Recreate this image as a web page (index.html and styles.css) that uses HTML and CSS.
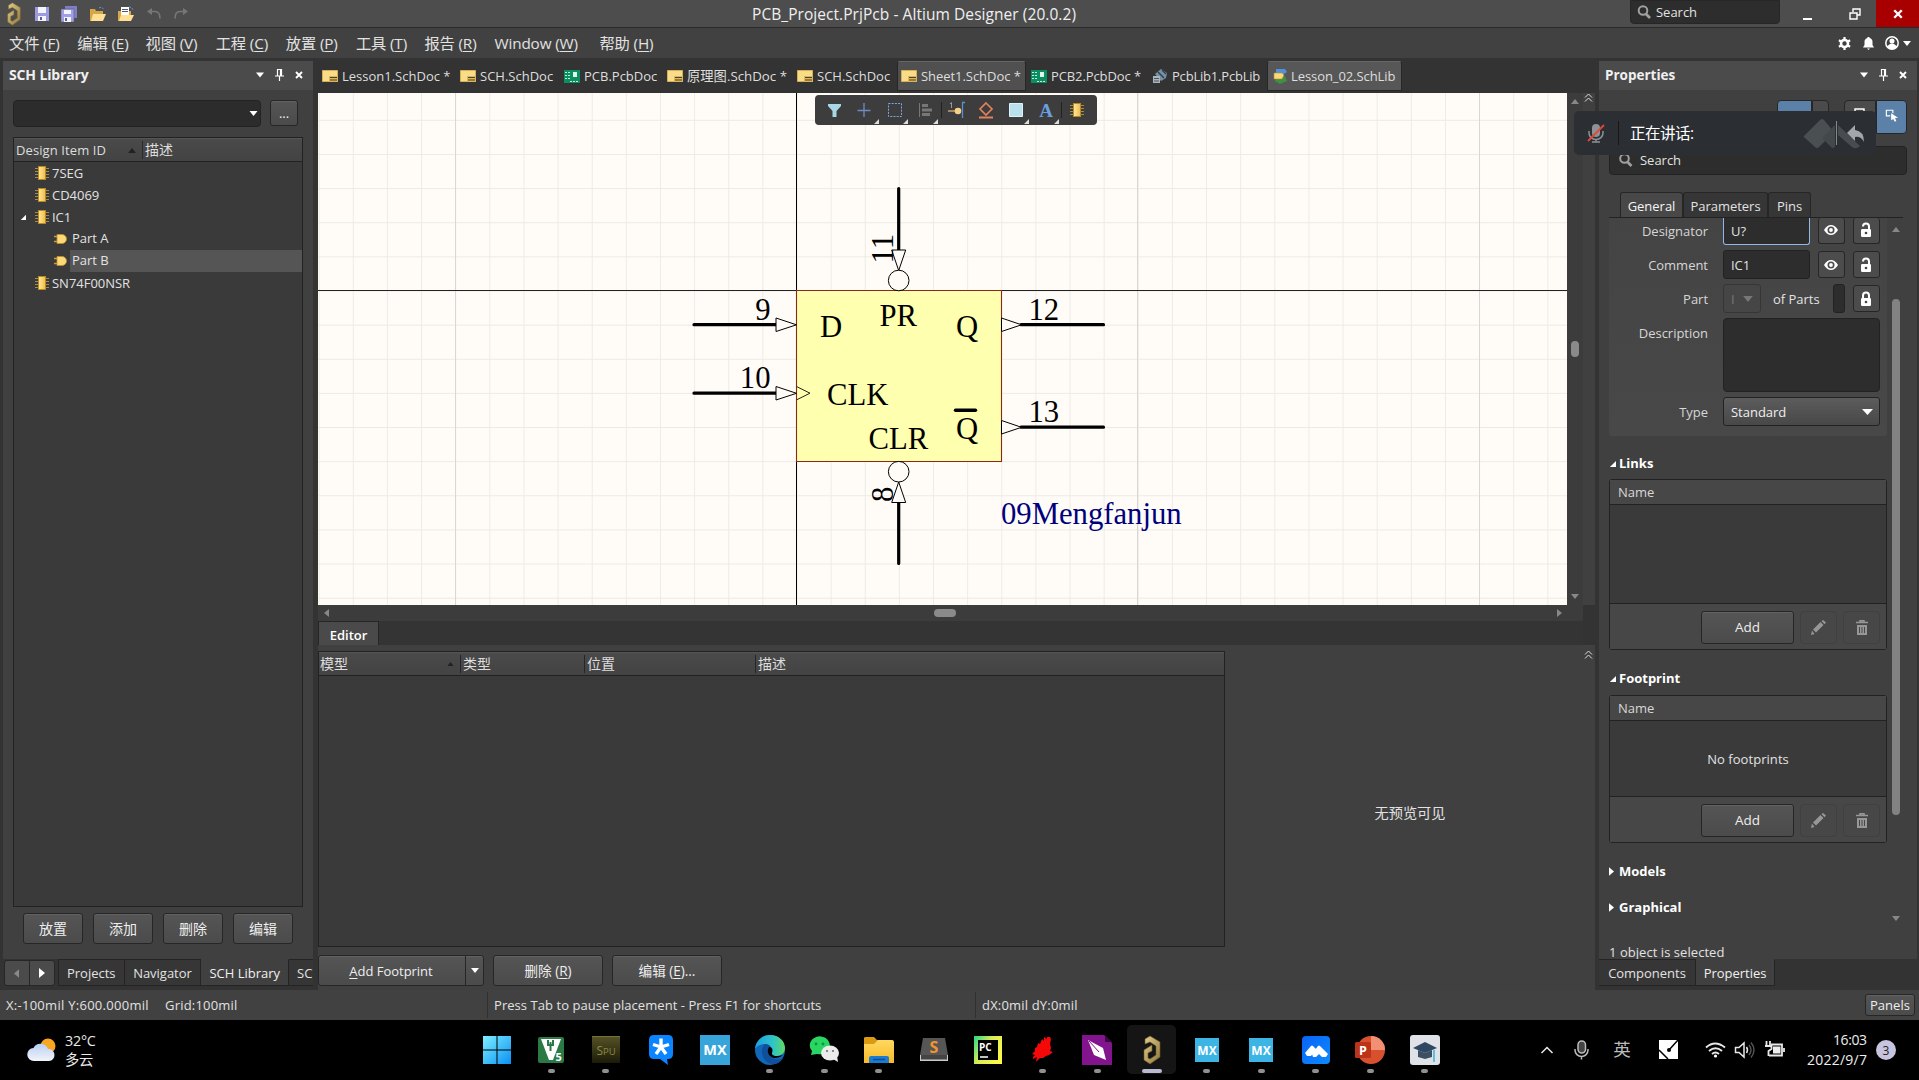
FILE: index.html
```html
<!DOCTYPE html>
<html lang="zh-CN">
<head>
<meta charset="utf-8">
<title>PCB_Project.PrjPcb - Altium Designer (20.0.2)</title>
<link rel="stylesheet" href="styles.css">
</head>
<body>
<svg class="defs" width="0" height="0">
  <defs>
    <linearGradient id="gold" x1="0" y1="0" x2="1" y2="0"><stop offset="0" stop-color="#ffe9a0"/><stop offset="1" stop-color="#f0bc4a"/></linearGradient>
    <linearGradient id="altiumGold" x1="0" y1="0" x2="1" y2="1"><stop offset="0" stop-color="#e3cf90"/><stop offset="1" stop-color="#8f7638"/></linearGradient>
    <linearGradient id="win" x1="0" y1="0" x2="1" y2="1"><stop offset="0" stop-color="#7df0ff"/><stop offset="1" stop-color="#0a90f4"/></linearGradient>
    <linearGradient id="edgeA" x1="0" y1="0" x2="1" y2="0"><stop offset="0" stop-color="#1d9fe0"/><stop offset=".6" stop-color="#2fc4c9"/><stop offset="1" stop-color="#63d860"/></linearGradient>
    <linearGradient id="meet" x1="0" y1="0" x2="1" y2="1"><stop offset="0" stop-color="#0b62f5"/><stop offset="1" stop-color="#0c8bff"/></linearGradient>
    <linearGradient id="pc" x1="0" y1="0" x2="1" y2=".6"><stop offset="0" stop-color="#21d789"/><stop offset=".5" stop-color="#d9ec55"/><stop offset="1" stop-color="#fcf84a"/></linearGradient>
    <linearGradient id="cloud" x1="0" y1="0" x2="0" y2="1"><stop offset="0" stop-color="#b9cff5"/><stop offset="1" stop-color="#f2f4f8"/></linearGradient>
    <linearGradient id="spu" x1="0" y1="0" x2="0" y2="1"><stop offset="0" stop-color="#575426"/><stop offset="1" stop-color="#1b1a08"/></linearGradient>
    <linearGradient id="folder" x1="0" y1="0" x2="0" y2="1"><stop offset="0" stop-color="#ffd95e"/><stop offset="1" stop-color="#f7b92a"/></linearGradient>
  </defs>
  <symbol id="chip" viewBox="0 0 14 14"><path d="M0 2.500h14M0 5.500h14M0 8.500h14M0 11.500h14" stroke="#a8893f"/><rect x="3.500" y=".500" width="7" height="13" fill="url(#gold)" stroke="#b98a22"/></symbol>
  <symbol id="gate" viewBox="0 0 13 10"><path d="M0 2.500h4M0 7.500h4" stroke="#c99c3a" stroke-width="1.400"/><path d="M3 .500h5a4.500 4.500 0 0 1 0 9H3z" fill="#fbd878" stroke="#c38f2c" stroke-width=".800"/></symbol>
  <symbol id="sch" viewBox="0 0 16 12"><path d="M.500.500h15v11H.500z" fill="#f8dc87" stroke="#d6b057"/><path d="M7 6h9v6H7z" fill="#dcb65c"/><path d="M8 7.500h7M8 10h7" stroke="#4d4226"/></symbol>
  <symbol id="pcb" viewBox="0 0 16 13"><path d="M0 0h16v13H0z" fill="#0c8f60"/><path d="M1 2.500h2M1 5.500h2M1 8.500h2M4 2.500h3M4 5.500h3M4 8.500h3M6 11.500h9" stroke="#bff0dc" stroke-dasharray="2 1"/><path d="M9 2h4v5H9z" fill="#e2f5ee"/></symbol>
  <symbol id="pcblib" viewBox="0 0 16 14"><path d="m3 5 6-5 6 4-1 5-5 3z" fill="#7890a5"/><path d="m6 3 6 6M10 1l4 4" stroke="#33414d" stroke-width="1.500"/><path d="M1 7h7v7H1z" fill="#aab5bd"/><path d="M2 9.500h5M2 12h5" stroke="#4a555d"/></symbol>
  <symbol id="schlib" viewBox="0 0 15 15"><path d="M3 0h9l2 3-3 2H3z" fill="#4f91dd"/><path d="m3 9 9-2 2 5-7 3-5-3z" fill="#3f9142"/><path d="M1 4h8l2 2-2 4H1z" fill="#fbd978" stroke="#b58b2c" stroke-width=".600"/></symbol>
  <symbol id="pin" viewBox="0 0 9 12"><path d="M2 .500h5M2.500 0v6.500M5.500 0v6.500M6.500 0v6.500M0 7h9M4.500 7v5" stroke="#fff" stroke-width="1.200" fill="none"/></symbol>
  <symbol id="x" viewBox="0 0 8 8"><path d="m1 1 6 6M7 1 1 7" stroke="#fff" stroke-width="1.900"/></symbol>
  <symbol id="down" viewBox="0 0 8 5"><path d="M0 0h8L4 5z" fill="currentColor"/></symbol>
  <symbol id="up" viewBox="0 0 8 5"><path d="M0 5h8L4 0z" fill="currentColor"/></symbol>
  <symbol id="mag" viewBox="0 0 14 14"><circle cx="6" cy="5.500" r="4.300" fill="none" stroke="#a0a0a0" stroke-width="2"/><path d="m9 9 4 4" stroke="#a0a0a0" stroke-width="2.600"/></symbol>
  <symbol id="open" viewBox="0 0 8 8"><path d="M8 1v7H1z" fill="#fff"/></symbol>
  <symbol id="closed" viewBox="0 0 6 10"><path d="m0 0 6 5-6 5z" fill="#fff"/></symbol>
  <symbol id="chev" viewBox="0 0 9 9"><path d="m1 4.500 3.500-3.500L8 4.500M1 8.500 4.500 5 8 8.500" fill="none" stroke="#ddd"/></symbol>
  <symbol id="eye" viewBox="0 0 14 12"><path d="M0 6q3-5 7-5t7 5q-3 5-7 5T0 6z" fill="#fff"/><circle cx="7" cy="6" r="3.500" fill="#4b4b4b"/><circle cx="7" cy="6" r="1.900" fill="#fff"/></symbol>
  <symbol id="unlock" viewBox="0 0 12 16"><rect x="1" y="7" width="10" height="8" rx="1.200" fill="#fff"/><path d="M3 4.500a3 3 0 0 1 6 0V8" fill="none" stroke="#fff" stroke-width="2"/><circle cx="6" cy="11" r="1.300" fill="#444"/></symbol>
  <symbol id="lock" viewBox="0 0 12 16"><rect x="1" y="7" width="10" height="8" rx="1.200" fill="#fff"/><path d="M3 8V4.500a3 3 0 0 1 6 0V8" fill="none" stroke="#fff" stroke-width="2"/><circle cx="6" cy="11" r="1.300" fill="#444"/></symbol>
  <symbol id="pencil" viewBox="0 0 15 15"><path d="m0 15 1-4.500L3.500 14zM2 9.500l7.500-7.500 3 3L5 12.500zM10.500 1 12 0l3 2.500-1.500 1.700z" fill="#979797"/></symbol>
  <symbol id="trash" viewBox="0 0 12 15"><path d="M0 2.500h12M4 2V.700h4V2" stroke="#979797" stroke-width="1.500" fill="none"/><path d="M1 5h10v10H1z" fill="#979797"/><path d="M3.500 7v6M6 7v6M8.500 7v6" stroke="#484848"/></symbol>
  <symbol id="altium" viewBox="0 0 20 30"><path d="M3 9V4L8 1l10 6v15L8 29l-6-4V15l8-5v6l-4 2v5l2 1 6-4v-9L8 7z" fill="url(#altiumGold)" stroke="#6f5c2b" stroke-width=".600"/></symbol>
</svg>

<header class="titlebar">
  <div class="quick">
    <svg class="q-logo" width="16" height="24"><use href="#altium"/></svg>
    <svg width="14" height="14" viewBox="0 0 14 14"><path d="M0 0h14v14H0z" fill="#9c9be0"/><path d="M3 0h8v6H3zM3 9h8v5H3z" fill="#f4f4ff"/><path d="M5 10h2v3H5z" fill="#5a59a8"/></svg>
    <svg width="16" height="16" viewBox="0 0 16 16"><path d="M4 0h12v12H4z" fill="#7f7ec6"/><path d="M0 3h13v13H0z" fill="#a09fe6" stroke="#555" stroke-width=".500"/><path d="M3 4h7v4H3zM3 11h7v5H3z" fill="#f4f4ff"/><path d="M4 12h2v3H4z" fill="#5a59a8"/></svg>
    <svg width="16" height="16" viewBox="0 0 16 16"><path d="M0 3h5l1 2h7v10H0z" fill="#d6a748"/><path d="M3 8h13l-3 7H1z" fill="#ffdf94"/><path d="M9 2q3-2 5 2" fill="none" stroke="#5b9bd6" stroke-dasharray="2 1"/></svg>
    <svg width="16" height="16" viewBox="0 0 16 16"><path d="M0 5h13v10H0z" fill="#d6a748"/><path d="M3 1h8v9H3z" fill="#fff"/><path d="M4 3.500h6M4 5.500h6" stroke="#557"/><path d="M3 9h13l-3 6H1z" fill="#ffdf94"/><path d="M11 1q3 0 4 3" fill="none" stroke="#5b9bd6" stroke-dasharray="2 1"/></svg>
    <svg width="14" height="11" viewBox="0 0 14 11"><path d="M5 0v7L0 3.500z" fill="#777"/><path d="M4 3.500h4q5 0 5 7" stroke="#777" stroke-width="1.600" fill="none"/></svg>
    <svg width="14" height="11" viewBox="0 0 14 11"><path d="M9 0v7l5-3.500z" fill="#777"/><path d="M10 3.500H6q-5 0-5 7" stroke="#777" stroke-width="1.600" fill="none"/></svg>
  </div>
  <div class="title">PCB_Project.PrjPcb - Altium Designer (20.0.2)</div>
  <div class="winctl">
    <div class="tsearch"><svg width="14" height="14"><use href="#mag"/></svg><span>Search</span></div>
    <div class="wbtn min"><i></i></div>
    <div class="wbtn"><svg width="12" height="12" viewBox="0 0 12 12"><path d="M4 4V1h7v6H8M1 5h7v6H1z" fill="none" stroke="#fff" stroke-width="1.400"/></svg></div>
    <div class="wbtn close"><svg width="10" height="10"><use href="#x" width="10" height="10"/></svg></div>
  </div>
</header>

<nav class="menubar">
  <span class="m1">文件 (<u>F</u>)</span><span class="m1">编辑 (<u>E</u>)</span><span class="m2">视图 (<u>V</u>)</span><span class="m2">工程 (<u>C</u>)</span><span class="m2">放置 (<u>P</u>)</span><span class="m4">工具 (<u>T</u>)</span><span class="m2">报告 (<u>R</u>)</span><span class="m3">Window (<u>W</u>)</span><span class="m1">帮助 (<u>H</u>)</span>
  <div class="menu-icons">
    <svg width="13" height="13" viewBox="0 0 13 13"><circle cx="6.500" cy="6.500" r="3.500" fill="none" stroke="#fff" stroke-width="2.600"/><path d="M6.500 0v3M6.500 10v3M.900 3.200l2.600 1.500M9.500 8.300l2.600 1.500M.900 9.800l2.600-1.500M9.500 4.700l2.600-1.500" stroke="#fff" stroke-width="2.200"/></svg>
    <svg width="11" height="13" viewBox="0 0 11 13"><path d="M0 10.500 1.500 8V5a4 4 0 0 1 3-4V0h2v1a4 4 0 0 1 3 4v3l1.500 2.500zM4 11.500h3L5.500 13z" fill="#fff"/></svg>
    <svg width="14" height="14" viewBox="0 0 14 14"><circle cx="7" cy="7" r="6.200" fill="none" stroke="#fff" stroke-width="1.500"/><circle cx="7" cy="5" r="2.500" fill="#fff"/><path d="M2 11q2-3.500 5-3.500t5 3.500l-2.500 2h-5z" fill="#fff"/></svg>
    <svg width="8" height="5"><use href="#down"/></svg>
  </div>
</nav>

<main class="workspace">
  <section class="left">
    <div class="panel">
      <div class="phead"><b>SCH Library</b><svg width="8" height="6"><use href="#down"/></svg><svg width="9" height="12"><use href="#pin"/></svg><svg width="8" height="8"><use href="#x"/></svg></div>
      <div class="lib-top"><div class="combo"><svg width="9" height="5"><use href="#down"/></svg></div><div class="btn dots">...</div></div>
      <div class="lib-table">
        <div class="thead"><span class="c1">Design Item ID<svg width="8" height="5"><use href="#up"/></svg></span><span class="c2">描述</span></div>
        <div class="row"><svg class="chip" width="14" height="14"><use href="#chip"/></svg>7SEG</div>
        <div class="row"><svg class="chip" width="14" height="14"><use href="#chip"/></svg>CD4069</div>
        <div class="row open"><svg class="tri" width="6" height="6"><use href="#open"/></svg><svg class="chip" width="14" height="14"><use href="#chip"/></svg>IC1</div>
        <div class="row sub"><svg width="13" height="10"><use href="#gate"/></svg><span>Part A</span></div>
        <div class="row sub sel"><svg width="13" height="10"><use href="#gate"/></svg><span>Part B</span></div>
        <div class="row"><svg class="chip" width="14" height="14"><use href="#chip"/></svg>SN74F00NSR</div>
      </div>
      <div class="lib-btns"><div class="btn">放置</div><div class="btn">添加</div><div class="btn">删除</div><div class="btn">编辑</div></div>
    </div>
    <div class="ptabs">
      <div class="arrows"><span><svg width="5" height="9" viewBox="0 0 6 10"><path d="M6 0 0 5l6 5z" fill="#8a8a8a"/></svg></span><span><svg width="6" height="10"><use href="#closed"/></svg></span></div>
      <div class="pt t1">Projects</div><div class="pt t2">Navigator</div><div class="pt t3 on">SCH Library</div><div class="pt t4">SC</div>
    </div>
  </section>

  <section class="center">
    <div class="doctabs">
      <div class="dt d1"><svg width="16" height="12"><use href="#sch"/></svg>Lesson1.SchDoc *</div>
      <div class="dt d2"><svg width="16" height="12"><use href="#sch"/></svg>SCH.SchDoc</div>
      <div class="dt d3"><svg width="16" height="13"><use href="#pcb"/></svg>PCB.PcbDoc</div>
      <div class="dt d4"><svg width="16" height="12"><use href="#sch"/></svg>原理图.SchDoc *</div>
      <div class="dt d2"><svg width="16" height="12"><use href="#sch"/></svg>SCH.SchDoc</div>
      <div class="dt d5 on"><svg width="16" height="12"><use href="#sch"/></svg>Sheet1.SchDoc *</div>
      <div class="dt d6"><svg width="16" height="13"><use href="#pcb"/></svg>PCB2.PcbDoc *</div>
      <div class="dt d7"><svg width="16" height="14"><use href="#pcblib"/></svg>PcbLib1.PcbLib</div>
      <div class="dt d8 on"><svg width="15" height="15"><use href="#schlib"/></svg>Lesson_02.SchLib</div>
    </div>
    <div class="canvas-row">
      <div class="canvas">
        <svg class="sheet" width="1249" height="512" viewBox="318 93 1249 512">
          <defs>
            <pattern id="minor" x="796.500" y="290.500" width="34.130" height="34.130" patternUnits="userSpaceOnUse"><path d="M0 0H34.130M0 0V34.130" stroke="#edeae6" stroke-width="1.800" fill="none"/></pattern>
          </defs>
          <path d="M318 93h1249v512H318z" fill="#fffcf7"/>
          <path d="M318 93h1249v512H318z" fill="url(#minor)"/>
          <path d="M455.500 93v512M1137.500 93v512M1479.500 93v512" stroke="#d9d7d4"/>
          <path d="M796.500 93v512" stroke="#000"/><path d="M318 290.500h1249" stroke="#222"/>
          <path d="M796.500 290.500h205v171h-205z" fill="#ffffb0" stroke="#8a2a14" stroke-width="1.100"/>
          <g stroke="#000" stroke-width="3.200" stroke-linecap="round"><path d="M694 324.700h82M694 393.200h82M1021 324.700h82.500M1021 427.200h82.500M898.700 188.500V250M898.700 503v60.500"/></g>
          <g fill="#fffcf7" stroke="#000" stroke-width="1">
            <path d="M776 318v13.500l20.500-6.700zM776 386.500V400l20.500-6.700zM1001.500 318v13.500l20-6.700zM1001.500 420.500V434l20-6.700zM891.700 250h14l-7 20.500zM891.700 502.500h14l-7-20.500z"/>
            <circle cx="898.700" cy="280.500" r="10.300"/><circle cx="898.700" cy="471.700" r="10.300"/>
          </g>
          <path d="m796.500 386.500 13.500 6.700-13.500 6.700" fill="none" stroke="#222"/>
          <path d="M955.500 410.300h20" stroke="#000" stroke-width="3.400" stroke-linecap="round"/>
          <g class="stext">
            <text x="770.500" y="320" text-anchor="end">9</text><text x="770.500" y="388" text-anchor="end">10</text>
            <text x="1028.500" y="320">12</text><text x="1028.500" y="422.300">13</text>
            <text x="0" y="0" transform="translate(893 263.500) rotate(-90)">11</text><text x="0" y="0" transform="translate(893 502) rotate(-90)">8</text>
            <text x="820" y="337">D</text><text x="827" y="405">CLK</text><text x="879.500" y="325.800">PR</text><text x="868.500" y="449">CLR</text>
            <text x="956" y="337">Q</text><text x="956" y="439">Q</text>
            <text class="owner" x="1001" y="524">09Mengfanjun</text>
          </g>
        </svg>
        <div class="floatbar">
          <svg width="282" height="30" viewBox="0 0 282 30">
            <path d="M13 9h13v2l-4.500 5v6h-4v-6L13 11z" fill="#a8d8e6"/>
            <path d="M49 8v14M42.500 15.500h13" stroke="#6d8cc4" stroke-width="1.300"/>
            <path d="M73.500 8.500h13v13h-13z" fill="none" stroke="#7fa3e8" stroke-dasharray="2 1.200"/>
            <path d="M104.500 8v14" stroke="#777"/><path d="M107 9h6v3h-6zM107 13.500h10v3h-10zM107 18h8v3h-8z" fill="#777"/>
            <path d="M126.500 7v16M246.500 7v16" stroke="#222"/>
            <path d="M133 16h8" stroke="#c9a566" stroke-width="1.500"/><circle cx="143" cy="16" r="3.300" fill="#f5d28a"/><path d="M150 7.500H147.500V23" fill="none" stroke="#5b8fd0" stroke-width="1.300"/><path d="m135 9 1.500-1.500V13" fill="none" stroke="#999"/>
            <path d="m171 8 6 6-6 6-6-6z" fill="none" stroke="#e0825c" stroke-width="1.700"/><path d="M164 22.500h14" stroke="#e0825c" stroke-width="2"/>
            <path d="M194.500 8.500h13v13h-13z" fill="#b9e0ec" stroke="#dbf2f8"/>
            <text class="glyphA" x="231" y="22" text-anchor="middle">A</text>
            <path d="M64 24v5h-5zM93 24v5h-5zM123 24v5h-5zM214 24v5h-5zM244 24v5h-5z" fill="#ddd"/>
            <use href="#chip" x="255" y="8" width="14" height="14"/>
          </svg>
        </div>
      </div>
      <div class="vsb"><svg width="8" height="5"><use href="#up"/></svg><i></i><svg width="8" height="5"><use href="#down"/></svg></div>
      <div class="gutter"><svg width="9" height="9"><use href="#chev"/></svg></div>
    </div>
    <div class="hsb"><svg width="5" height="8" viewBox="0 0 5 8"><path d="M5 0 0 4l5 4z" fill="#888"/></svg><i></i><svg width="5" height="8" viewBox="0 0 5 8"><path d="m0 0 5 4-5 4z" fill="#888"/></svg></div>
    <div class="edtabs"><div>Editor</div></div>
    <div class="editor">
      <div class="ed-left">
        <div class="ed-table">
          <div class="thead"><span class="e1">模型<svg width="7" height="4" viewBox="0 0 8 5"><use href="#up"/></svg></span><span class="e2">类型</span><span class="e3">位置</span><span class="e4">描述</span></div>
        </div>
        <div class="ed-btns"><div class="btn split"><span><u>A</u>dd Footprint</span><em><svg width="8" height="5"><use href="#down"/></svg></em></div><div class="btn b2">删除 (<u>R</u>)</div><div class="btn b3">编辑 (<u>E</u>)...</div></div>
      </div>
      <div class="preview">无预览可见</div>
      <div class="gutter"><svg width="9" height="9"><use href="#chev"/></svg></div>
    </div>
  </section>

  <section class="right">
    <div class="panel">
      <div class="phead"><b>Properties</b><svg width="8" height="6"><use href="#down"/></svg><svg width="9" height="12"><use href="#pin"/></svg><svg width="8" height="8"><use href="#x"/></svg></div>
      <div class="modes"><div class="mode blue w35"></div><div class="mode w17"></div><div class="mode w32"><svg width="12" height="12" viewBox="0 0 12 12"><path d="M1 8V1h9v6" fill="none" stroke="#fff" stroke-width="1.400"/></svg></div><div class="mode blue w30"><svg width="14" height="13" viewBox="0 0 16 15"><path d="M6 8H1.500V1.500H9V5" fill="none" stroke="#fff" stroke-width="1.300"/><path d="m7 5 8 5-3.500.500L13 14l-2 .500-1.500-3L7 13z" fill="#fff"/></svg></div></div>
      <div class="psearch"><svg width="15" height="14"><use href="#mag"/></svg>Search</div>
      <div class="gtabs"><div class="g1 on">General</div><div class="g2">Parameters</div><div class="g3">Pins</div></div>
      <div class="pscroll">
        <div class="pcontent">
          <div class="group">
            <div class="f des"><label>Designator</label><div class="inp act">U?</div><div class="ib"><svg width="14" height="12"><use href="#eye"/></svg></div><div class="ib"><svg width="12" height="16"><use href="#unlock"/></svg></div></div>
            <div class="f"><label>Comment</label><div class="inp">IC1</div><div class="ib"><svg width="14" height="12"><use href="#eye"/></svg></div><div class="ib"><svg width="12" height="16"><use href="#unlock"/></svg></div></div>
            <div class="f"><label>Part</label><div class="mini">I<svg width="10" height="6"><use href="#down"/></svg></div><span class="of">of Parts</span><div class="tiny"></div><div class="ib"><svg width="12" height="16"><use href="#lock"/></svg></div></div>
            <div class="f desc"><label>Description</label><div class="area"></div></div>
            <div class="f"><label>Type</label><div class="select">Standard<svg width="11" height="6" viewBox="0 0 8 5" preserveAspectRatio="none"><path d="M0 0h8L4 5z" fill="#fff"/></svg></div></div>
          </div>
          <h3 class="h-links"><svg width="7" height="7"><use href="#open"/></svg>Links</h3>
          <div class="box links"><div class="bh">Name</div><div class="bb"></div><div class="bf"><div class="btn add">Add</div><div class="ghost"><svg width="15" height="15"><use href="#pencil"/></svg></div><div class="ghost"><svg width="12" height="15"><use href="#trash"/></svg></div></div></div>
          <h3 class="h-foot"><svg width="7" height="7"><use href="#open"/></svg>Footprint</h3>
          <div class="box foot"><div class="bh">Name</div><div class="bb">No footprints</div><div class="bf"><div class="btn add">Add</div><div class="ghost"><svg width="15" height="15"><use href="#pencil"/></svg></div><div class="ghost"><svg width="12" height="15"><use href="#trash"/></svg></div></div></div>
          <h3 class="h-mod"><svg width="5" height="9" viewBox="0 0 6 10"><path d="m0 0 6 5-6 5z" fill="#fff"/></svg>Models</h3>
          <h3 class="h-gra"><svg width="5" height="9" viewBox="0 0 6 10"><path d="m0 0 6 5-6 5z" fill="#fff"/></svg>Graphical</h3>
          <div class="selinfo">1 object is selected</div>
        </div>
        <div class="pbar"><svg width="8" height="5"><use href="#up"/></svg><i></i><svg width="8" height="5"><use href="#down"/></svg></div>
      </div>
    </div>
    <div class="ptabs rt"><div class="pt r1">Components</div><div class="pt r2 on">Properties</div></div>
  </section>
</main>

<div class="meeting">
  <svg width="302" height="44" viewBox="0 0 302 44">
    <rect x="18" y="13" width="8" height="13" rx="4" fill="#8d9294"/><path d="M15 20v2a7 6.500 0 0 0 14 0v-2M22 28.500V31M18 31h8" stroke="#8d9294" stroke-width="1.500" fill="none"/><path d="m14 30 16-16" stroke="#e0483e" stroke-width="1.800"/>
    <path d="M44.500 10v24" stroke="#141618"/>
    <path d="M230 25 246 9q2-2 4 0l10 12-15 15q-2 2-4 0l-10-9q-2-1-1-2z" fill="#4a4f52"/><path d="m249 26 12-12v22q-2 2-4 0l-8-8z" fill="#43484b"/><path d="m264 14 22 21q-4 4-8 1l-14-12z" fill="#474c4f"/>
    <path d="M262.500 10v24" stroke="#83888b"/><path d="M273 22l8-8v5q9 1 9 12-3-6-9-5v4z" fill="#a3a7a9"/>
  </svg>
  <span>正在讲话:</span>
</div>

<footer class="status"><span class="s1">X:-100mil Y:600.000mil</span><span class="s2">Grid:100mil</span><span class="s3">Press Tab to pause placement - Press F1 for shortcuts</span><span class="s4">dX:0mil dY:0mil</span><div class="btn panels">Panels</div></footer>

<div class="taskbar">
  <div class="weather"><svg width="30" height="24" viewBox="0 0 30 24"><circle cx="21" cy="8" r="7.500" fill="#f9a620"/><path d="M7 23a6.500 6.500 0 0 1-.500-13A8 8 0 0 1 21 11a6 6 0 0 1 1 12z" fill="url(#cloud)"/></svg><div>32°C<br>多云</div></div>
  <div class="apps">
    <div class="app"><svg width="30" height="30" viewBox="0 0 30 30"><path d="M1 1h13.500v13.500H1zM15.500 1H29v13.500H15.500zM1 15.500h13.500V29H1zM15.500 15.500H29V29H15.500z" fill="url(#win)"/></svg></div>
    <div class="app run"><svg width="30" height="30" viewBox="0 0 30 30"><rect x="2" y="2" width="26" height="26" rx="2" fill="#2b7a45"/><path d="M5 4h20l-8 21h-4z" fill="#fff"/><path d="M12 5v5h5V5M14.500 7v9" stroke="#2b7a45" stroke-width="2" fill="none"/><text class="ai" x="19.500" y="26" font-size="11" fill="#fff">5</text></svg></div>
    <div class="app run"><svg width="30" height="30" viewBox="0 0 30 30"><path d="M1 1h28v27H1z" fill="url(#spu)"/><path d="M1 1.500h28" stroke="#77733a"/><text class="spu" x="15" y="20" text-anchor="middle" fill="#8d8945">S<tspan font-size="9.500">PU</tspan></text></svg></div>
    <div class="app"><svg width="30" height="30" viewBox="0 0 30 30"><path d="M8 0h14q5 0 5 5v14q0 5-5 5h-1l1 6-8-6H8q-5 0-5-5V5q0-5 5-5z" fill="#0a84ff"/><path d="M15 3.500V12M15 12l-8-2.500M15 12l8-2.500M15 12l-5 7M15 12l5 7" stroke="#fff" stroke-width="3.400"/></svg></div>
    <div class="app"><svg width="30" height="30" viewBox="0 0 30 30"><path d="M0 0h30v30H0z" fill="#37a5da"/><text class="mx" x="15" y="19.500" text-anchor="middle" font-size="14.500">MX</text></svg></div>
    <div class="app run"><svg width="30" height="30" viewBox="0 0 30 30"><circle cx="15" cy="15" r="15" fill="#1167b8"/><path d="M0 14C1 5 8 0 15 0c9 0 15 6 15 13 0 6-5 8-9 8-4 0-5-2-4-4 1-5-3-8-7-8-5 0-9 3-10 5z" fill="url(#edgeA)"/><path d="M10 9c-6 6-3 17 6 20 5 1 10-2 12-6-5 3-14 1-15-5-.500-4 1-6 2-7q-2-2-5-2z" fill="#0f4f9c"/><path d="M14 12c-3 5 0 10 5 11 4 0 7-1 9-3 0 0-4 1.500-8 1-4-1-3-3-2.500-5 0-3-1-4-3.500-4z" fill="#000"/></svg></div>
    <div class="app run"><svg width="32" height="30" viewBox="0 0 32 30"><path d="M3 20 4 16A10 9 0 1 1 9 19z" fill="#2bd562"/><circle cx="8" cy="9" r="1.400" fill="#094"/><circle cx="15" cy="9" r="1.400" fill="#094"/><ellipse cx="22" cy="18" rx="9" ry="7.500" fill="#ececec"/><path d="m25 24 5 3-1-6z" fill="#ececec"/><circle cx="19" cy="16" r="1" fill="#666"/><circle cx="25" cy="16" r="1" fill="#666"/></svg></div>
    <div class="app run"><svg width="30" height="28" viewBox="0 0 30 28"><path d="M0 2q0-1 2-1h8l3 3h10v8H0z" fill="#dc9a12"/><path d="M0 8h10l4-4h14q2 0 2 2v21H0z" fill="url(#folder)"/><path d="M5 27v-5q0-2 2-2h16q2 0 2 2v5z" fill="#1b7bd0"/><path d="M9 23.500h12" stroke="#0b4f93" stroke-width="1.500"/></svg></div>
    <div class="app"><svg width="30" height="26" viewBox="0 0 30 26"><path d="M4 1h22l3 17v6H1v-6z" fill="#565656"/><path d="M1 18h28v6H1z" fill="#c9c9c9"/><path d="M2 22.500h26v-4.500H2z" fill="#444"/><text class="ai" x="15" y="16" text-anchor="middle" font-size="16" fill="#f39433">S</text></svg></div>
    <div class="app"><svg width="28" height="28" viewBox="0 0 28 28"><path d="M0 0h28v28H0z" fill="url(#pc)"/><path d="M4 4h20v20H4z" fill="#000"/><text class="ai" x="5" y="15" font-size="10" fill="#fff">PC</text><path d="M6 21h8" stroke="#fff" stroke-width="1.500"/></svg></div>
    <div class="app run"><svg width="26" height="28" viewBox="0 0 26 28"><path d="m12 3 2 2 0-4 3 2 0-2 3 0 1 2-1 5 1 4-1 3 3 1-4 3-3 1-3 2-3 0-4 4 1-5-4 2 0-2 2-2-3-1 3-3 0-3 2-1 1-4 2 1z" fill="#f60808"/></svg></div>
    <div class="app run"><svg width="30" height="30" viewBox="0 0 30 30"><path d="M0 0h22l8 8v22H0z" fill="#82158d"/><path d="M23 0v7h7z" fill="#3a0b42"/><path d="m6 5 15 8 3 12-12-5z" fill="#fff"/><path d="m7 6 10 11" stroke="#82158d"/></svg></div>
    <div class="app act run"><svg width="20" height="30"><use href="#altium"/></svg></div>
    <div class="app run"><svg width="24" height="24" viewBox="0 0 24 24"><path d="M0 0h24v24H0z" fill="#3cb4e4"/><text class="mx" x="12" y="16.500" text-anchor="middle" font-size="12">MX</text></svg></div>
    <div class="app run"><svg width="24" height="24" viewBox="0 0 24 24"><path d="M0 0h24v24H0z" fill="#3cb4e4"/><text class="mx" x="12" y="16.500" text-anchor="middle" font-size="12">MX</text></svg></div>
    <div class="app run"><svg width="28" height="28" viewBox="0 0 28 28"><rect width="28" height="28" rx="4" fill="url(#meet)"/><path d="m3 17 6-7q1-1 2 0l3 3-5 7H5zM10 18l6-8q1-1 2 0l8 8-2 3h-4l-3-3-3 3h-3z" fill="#fff"/></svg></div>
    <div class="app run"><svg width="30" height="28" viewBox="0 0 30 28"><circle cx="16" cy="14" r="14" fill="#d8512f"/><path d="M16 0a14 14 0 0 1 14 14H16z" fill="#f38f75"/><rect y="6" width="16" height="16" rx="1.500" fill="#bb3418"/><text class="ai" x="8" y="18.500" text-anchor="middle" font-size="12.500" fill="#fff">P</text></svg></div>
    <div class="app run"><svg width="30" height="30" viewBox="0 0 30 30"><rect width="30" height="30" rx="3" fill="#dfe3e8"/><path d="m15 7 12 6-12 5-12-5z" fill="#2e4763"/><path d="M8 15v7l7 2 7-2v-7l-7 3z" fill="#3c4f63"/><path d="M24 15v12" stroke="#43b4d8" stroke-width="1.600"/></svg></div>
  </div>
  <div class="tray">
    <svg width="400" height="60" viewBox="1519 1020 400 60" fill="none" stroke="#e8e8e8">
      <path d="m1541.500 1053 5.500-5.500 5.500 5.500" stroke-width="1.500"/>
      <rect x="1578" y="1041" width="7.500" height="12" rx="3.700" fill="#444" stroke="#bbb" stroke-width="1.500"/><path d="M1575 1049v1a6.500 6.500 0 0 0 13 0v-1M1581.500 1056.500v3" stroke="#bbb" stroke-width="1.500"/>
      <path d="M1659 1040h19v19h-19z" fill="#fff" stroke="none"/><path d="m1659 1050 9 9M1669 1050l9-10" stroke="#000" stroke-width="1.500"/><circle cx="1669" cy="1050" r="2" fill="#000" stroke="none"/>
      <path d="M1706 1047.500q9-8 19 0M1709 1051q6.500-5.500 13 0M1712 1054q3.500-3 7 0" stroke-width="1.900"/><circle cx="1715.500" cy="1056" r="1.600" fill="#fff" stroke="none"/>
      <path d="M1735.500 1047.500h3.500l5-4.500v14l-5-4.500h-3.500z" stroke-width="1.500"/><path d="M1746.500 1047q2 3 0 6" stroke-width="1.500"/><path d="M1749 1045q4 5 0 10M1751 1042.500q6 7.500 0 15" stroke="#555" stroke-width="1.400"/>
      <path d="M1771 1044.500h11v11h-13" stroke-width="1.800"/><path d="M1773 1046.500h7.500v7h-7.500z" fill="#eee" stroke="none"/><path d="M1784 1048v4M1766.500 1041v4M1770 1041v4M1765 1046h6.500v3l-3 2v5" stroke-width="1.800"/>
      <circle cx="1886" cy="1050" r="10" fill="#c6c4de" stroke="none"/>
      <g stroke="none" class="tt"><text x="1622" y="1056" text-anchor="middle" font-size="17.500" fill="#bbb">英</text><text x="1867" y="1044.500" text-anchor="end" textLength="34">16:03</text><text x="1867" y="1064.500" text-anchor="end" textLength="60">2022/9/7</text><text x="1886" y="1054.500" text-anchor="middle" font-size="12" fill="#222">3</text></g>
    </svg>
  </div>
</div>
</body>
</html>
```
FILE: styles.css
```css
* { box-sizing: border-box; }
body { margin: 0; width: 1919px; height: 1080px; overflow: hidden; display: flex; flex-direction: column; background: #333; color: #e2e2e2; font: 13px/18px "Open Sans", "Noto Sans CJK SC", sans-serif; letter-spacing: -.02px; white-space: nowrap; }
svg { display: block; flex: none; }
.defs { position: absolute; }
u { text-underline-offset: 2px; }

.titlebar { height: 28px; flex: none; display: grid; grid-template-columns: 752px 1fr 289px; align-items: center; background: #4d4d4d; border-bottom: 1px solid #2a2a2a; }
.quick { display: flex; align-items: center; gap: 12.600px; padding-left: 6px; }
.title { font-size: 15.500px; color: #efefef; letter-spacing: .06px; }
.winctl { display: flex; height: 27px; }
.tsearch { width: 150px; height: 24px; margin-right: 4px; background: #2d2d2d; border: 1px solid #262626; border-radius: 0 0 4px 4px; display: flex; align-items: center; gap: 5px; padding-left: 6px; }
.wbtn { width: 46px; display: flex; align-items: center; justify-content: center; }
.min i { width: 9px; height: 2px; background: #fff; margin-top: 10px; }
.winctl .wbtn:nth-child(3) { width: 46px; padding-left: 3px; }
.winctl .close { width: 43px; background: #a80000; }

.menubar { height: 30px; flex: none; display: flex; align-items: center; background: #414141; padding-left: 9px; font-size: 15.300px; letter-spacing: -.15px; }
.m1 { width: 68.300px; }
.m2 { width: 70.100px; }
.m4 { width: 68.500px; }
.m3 { width: 105px; }
.menu-icons { margin-left: auto; display: flex; align-items: center; gap: 11px; padding-right: 8px; }
.menu-icons svg:first-child { margin-right: 1px; }
.menu-icons svg:last-child { margin-left: -7px; color: #fff; }

.workspace { height: 932px; flex: none; display: grid; grid-template-columns: 313px 1282px 324px; padding-top: 3px; background: #333; }
.left { padding-left: 3px; }
.panel { height: 898px; background: #404040; display: flex; flex-direction: column; }
.phead { height: 29px; flex: none; background: #4b4b4b; display: flex; align-items: center; padding: 0 10px 2px 6px; gap: 11px; color: #fff; }
.phead b { flex: 1; font-size: 14px; color: #f0f0f0; letter-spacing: -.15px; }
.left .phead b { font-size: 14px; letter-spacing: -.15px; }
.right .phead b { font-size: 13.500px; letter-spacing: 0; }
.btn { display: flex; align-items: center; justify-content: center; background: linear-gradient(#555, #4b4b4b); border: 1px solid #262626; border-radius: 3px; color: #eee; box-shadow: inset 0 1px #626262; }
.lib-top { display: flex; gap: 9px; padding: 10px 0 0 10px; }
.combo { width: 248px; height: 27px; background: #2c2c2c; border: 1px solid #232323; border-radius: 4px; display: flex; align-items: center; justify-content: flex-end; padding-right: 2px; color: #fff; }
.dots { width: 28px; height: 26px; }
.lib-table { width: 290px; height: 770px; margin: 10px 0 0 10px; background: #3a3a3a; border: 1px solid #222; }
.thead { height: 24px; display: flex; align-items: center; background: linear-gradient(#4a4a4a, #434343); border-bottom: 1px solid #222; border-top: 1px solid #555; color: #ddd; }
.thead span { height: 18px; display: flex; align-items: center; padding-left: 2px; font-size: 14px; letter-spacing: -.1px; }
.thead svg { margin-left: auto; margin-right: 6px; color: #222; }
.thead .c1 { width: 129px; border-right: 1px solid #2a2a2a; font-size: 13px; letter-spacing: .1px; }
.row { height: 22px; display: flex; align-items: center; padding: 0 0 1px 21px; }
.row .chip { margin-right: 3px; }
.row.open { padding-left: 6px; }
.row .tri { margin-right: 9px; }
.row.sub { padding: 0 0 0 40px; gap: 3px; }
.row.sub span { flex: 1; height: 22px; line-height: 21px; padding-left: 2px; }
.row.sel span { background: #555; }
.lib-btns { display: flex; gap: 10px; padding: 6px 0 0 20px; }
.lib-btns .btn { width: 60px; height: 31px; font-size: 14px; }
.ptabs { display: flex; height: 27px; }
.arrows { width: 51px; height: 26px; margin: 1px 3px 0 1px; display: flex; background: #4b4b4b; border: 1px solid #262626; border-radius: 3px; }
.arrows span { flex: 1; display: flex; align-items: center; justify-content: center; border-right: 1px solid #262626; }
.arrows span:last-child { border: 0; }
.pt { display: flex; align-items: center; justify-content: center; background: #363636; border: 1px solid #242424; border-left-width: 0; overflow: hidden; }
.pt.on { background: #404040; border-top-color: #404040; color: #f0f0f0; }
.t1 { width: 67px; border-left-width: 1px; } .t2 { width: 77px; } .t3 { width: 88px; }
.t4 { width: 24px; border-right: 0; justify-content: flex-start; padding-left: 8px; }

.center { padding-left: 5px; display: flex; flex-direction: column; }
.doctabs { height: 32px; display: flex; }
.dt { height: 30px; display: flex; align-items: center; gap: 4px; padding-left: 4px; color: #dedede; letter-spacing: 0; border: 1px solid transparent; border-left: 0; }
.dt.on { background: #505050; border: 1px solid #272727; border-top-color: #666; border-radius: 3px 3px 0 0; padding-left: 3px; }
.d1 { width: 138px; } .d2 { width: 104px; } .d3 { width: 103px; } .d4 { width: 130px; font-size: 13.300px; }
.d5 { width: 129px; letter-spacing: -.05px; } .d6 { width: 121px; padding-left: 5px; letter-spacing: -.1px; } .d7 { width: 120px; padding-left: 5px; letter-spacing: -.2px; }
.dt.d8 { width: 135px; padding-left: 5px; background: #575757; gap: 3px; letter-spacing: -.08px; }
.canvas-row { display: flex; height: 512px; }
.canvas { width: 1249px; position: relative; }
.stext { font: 30.700px "Liberation Serif", serif; letter-spacing: 0; fill: #000; }
.stext .owner { fill: #00007d; }
.floatbar { position: absolute; left: 497px; top: 2px; width: 282px; height: 30px; background: #3d3d3d; border-radius: 4px; }
.glyphA { font: bold 19px "Liberation Serif", serif; fill: #6a9fe0; }
.vsb { width: 16px; background: #3c3c3c; display: flex; flex-direction: column; align-items: center; padding: 6px 0; color: #888; }
.vsb i { width: 8px; height: 16px; border-radius: 4px; background: #8a8a8a; margin: 237px 0 auto; }
.gutter { width: 12px; background: #404040; }
.canvas-row .gutter { padding: 0 1px; }
.hsb { width: 1265px; height: 16px; background: #3c3c3c; display: flex; align-items: center; padding: 0 5px 0 6px; }
.hsb i { width: 22px; height: 8px; border-radius: 4px; background: #8a8a8a; margin: 0 auto 0 605px; }
.hsb svg:last-child { margin-right: 16px; }
.edtabs { width: 1265px; height: 24px; background: #343434; }
.edtabs div { width: 61px; height: 24px; display: flex; align-items: center; justify-content: center; background: #4a4a4a; border: 1px solid #262626; border-bottom: 0; color: #fff; font-weight: 600; padding-top: 3px; }
.editor { height: 345px; background: #404040; display: flex; }
.ed-left { width: 907px; padding-top: 6px; }
.ed-table { height: 296px; background: #3a3a3a; border: 1px solid #222; }
.thead .e1 { width: 142px; padding-left: 1px; border-right: 1px solid #262626; }
.e2 { width: 124px; border-right: 1px solid #262626; } .e3 { width: 171px; border-right: 1px solid #262626; }
.ed-btns { display: flex; gap: 9px; padding-top: 8px; }
.ed-btns .btn { height: 31px; }
.split { width: 166px; }
.split span { flex: 1; text-align: center; padding-right: 2px; }
.split em { width: 18px; height: 29px; border-left: 1px solid #262626; display: flex; align-items: center; justify-content: center; color: #fff; }
.ed-btns .b2, .ed-btns .b3 { width: 110px; font-size: 13.600px; }
.preview { width: 358px; padding-left: 12px; display: flex; align-items: center; justify-content: center; padding-bottom: 10px; font-size: 14.200px; }
.editor .gutter { padding: 5px 1px; }

.right { padding: 0 2px 0 4px; }
.modes { height: 34px; margin: 10px 11px 0 178px; display: flex; }
.mode { height: 34px; flex: none; background: #4b4b4b; border: 1px solid #262626; display: flex; align-items: center; justify-content: center; }
.blue { background: #5c81a8; }
.w35 { width: 35px; border-radius: 4px 0 0 4px; } .w17 { width: 17px; margin-right: 15px; border-radius: 0 4px 4px 0; }
.w32 { width: 32px; border-radius: 4px 0 0 4px; padding-bottom: 6px; } .w30 { width: 31px; border-radius: 0 4px 4px 0; padding-bottom: 4px; }
.psearch { flex: none; height: 29px; margin: 12px 10px 0 10px; background: #2d2d2d; border: 1px solid #222; border-radius: 4px; display: flex; align-items: center; gap: 7px; padding: 0 0 2px 8px; }
.gtabs { flex: none; height: 26px; margin: 17px 14px 0 10px; padding-left: 11px; display: flex; border-bottom: 1px solid #222; }
.gtabs div { display: flex; align-items: center; justify-content: center; background: #363636; border: 1px solid #262626; border-bottom: 0; border-radius: 3px 3px 0 0; padding-top: 1px; }
.gtabs .on { background: #484848; color: #f5f5f5; }
.g1 { width: 63px; } .g2 { width: 85px; } .g3 { width: 43px; }
.pscroll { height: 741px; display: flex; padding-left: 10px; gap: 5px; }
.pcontent { width: 278px; }
.group { height: 218px; background: linear-gradient(#444, #484848); display: flex; flex-direction: column; gap: 5px; padding-right: 7px; border-radius: 0 0 3px 3px; }
.f { display: flex; height: 29px; align-items: center; }
.f.des { height: 27px; align-items: flex-start; }
.f.des label { padding-top: 4px; }
.f label { width: 99px; text-align: right; margin-right: 15px; flex: none; color: #d6d6d6; }
.inp { width: 87px; height: 29px; margin-right: 8px; background: #2d2d2d; border: 1px solid #222; border-radius: 3px; padding: 5px 7px; }
.des .inp { height: 27px; border-color: #8fb8e8; border-top: 0; border-radius: 0 0 3px 3px; padding-top: 4px; }
.ib { width: 27px; height: 27px; margin-right: 8px; flex: none; background: #4c4c4c; border: 1px solid #262626; border-radius: 3px; display: flex; align-items: center; justify-content: center; padding-right: 1px; }
.des .ib { height: 26px; border-top: 0; padding-bottom: 2px; }
.f .ib:last-child { margin-right: 0; }
.mini { width: 38px; height: 29px; border: 1px solid #363636; border-radius: 3px; color: #777; display: flex; align-items: center; justify-content: space-between; padding: 0 7px; }
.of { width: 60px; margin-left: 12px; }
.tiny { width: 12px; height: 29px; background: #2d2d2d; border: 1px solid #222; border-radius: 3px; margin-right: 8px; }
.f.desc { height: 74px; align-items: flex-start; }
.desc label { padding-top: 6px; }
.area { width: 157px; height: 74px; background: #2d2d2d; border: 1px solid #222; border-radius: 4px; }
.select { width: 157px; height: 29px; background: linear-gradient(#5c5c5c, #484848); border: 1px solid #222; border-radius: 3px; display: flex; align-items: center; justify-content: space-between; padding: 0 6px 0 7px; color: #eee; }
h3 { margin: 0; font-size: 13px; font-weight: 700; letter-spacing: 0; line-height: 18px; height: 18px; color: #fff; display: flex; align-items: center; gap: 3px; }
.h-links { margin-top: 18px; }
.h-foot { margin-top: 19px; }
.box { border: 1px solid #222; border-radius: 3px; background: #3a3a3a; width: 278px; margin-top: 7px; display: flex; flex-direction: column; }
.h-foot + .box { margin-top: 8px; }
.links { height: 171px; } .foot { height: 148px; }
.bh { height: 25px; background: #474747; border-bottom: 1px solid #222; padding: 3px 8px; color: #d8d8d8; }
.bb { flex: 1; display: flex; align-items: center; justify-content: center; letter-spacing: .05px; }
.bf { height: 46px; background: #474747; border-top: 1px solid #222; display: flex; align-items: center; justify-content: flex-end; gap: 6px; padding: 1px 6px 0 0; }
.add { width: 93px; height: 33px; font-size: 13.500px; }
.ghost { width: 37px; height: 33px; border: 1px solid #404040; border-radius: 4px; display: flex; align-items: center; justify-content: center; }
.h-mod { margin-top: 19px; } .h-gra { margin-top: 18px; }
.h-mod, .h-gra { gap: 5px; }
.selinfo { margin-top: 27px; letter-spacing: .05px; }
.pbar { width: 8px; display: flex; flex-direction: column; align-items: center; color: #888; padding: 9px 0 38px; }
.pbar i { width: 8px; height: 516px; margin: 67px 0 auto; border-radius: 4px; background: #828282; }
.rt .pt { border-left-width: 0; }
.r1 { width: 97px; } .r2 { width: 79px; }

.meeting { position: absolute; left: 1574px; top: 111px; width: 302px; height: 44px; border-radius: 5px; background: #2b2f33; color: #fff; }
.meeting span { position: absolute; left: 56px; top: 11px; font-size: 15.500px; line-height: 22px; letter-spacing: -.5px; }

.status { height: 30px; flex: none; background: #414141; display: flex; align-items: center; padding: 0 4px 0 6px; letter-spacing: .06px; }
.s1 { width: 159px; letter-spacing: .28px; } .s2 { width: 322px; letter-spacing: .2px; }
.s3 { width: 488px; border-left: 1px solid #303030; padding: 4px 0 4px 6px; }
.s4 { border-left: 1px solid #303030; padding: 4px 0 4px 6px; letter-spacing: .18px; }
.panels { margin-left: auto; width: 50px; height: 22px; }

.taskbar { height: 60px; flex: none; background: #000; display: grid; grid-template-columns: 469.500px 1fr 400px; }
.weather { display: flex; align-items: center; gap: 8px; padding-left: 27px; font-size: 14.300px; line-height: 19px; color: #e8e8e8; letter-spacing: -.2px; }
.apps { display: flex; }
.app { width: 54.600px; flex: none; display: flex; align-items: center; justify-content: center; position: relative; }
.app.run::after { content: ""; position: absolute; bottom: 7px; width: 7px; height: 4px; border-radius: 2px; background: #909090; }
.app.act::before { content: ""; position: absolute; top: 5px; width: 49px; height: 49px; border-radius: 5px; background: #151515; }
.app.act svg { position: relative; }
.app.act::after { width: 20px; background: #b9b8d2; }
.ai { font-family: "Open Sans", sans-serif; font-weight: 700; letter-spacing: 0; }
.spu { font: 12px "Open Sans", sans-serif; letter-spacing: 0; }
.mx { font-family: "Open Sans", sans-serif; font-weight: 700; fill: #fff; letter-spacing: 0; }
.tt { font-size: 14px; fill: #eee; letter-spacing: 0; }
```
